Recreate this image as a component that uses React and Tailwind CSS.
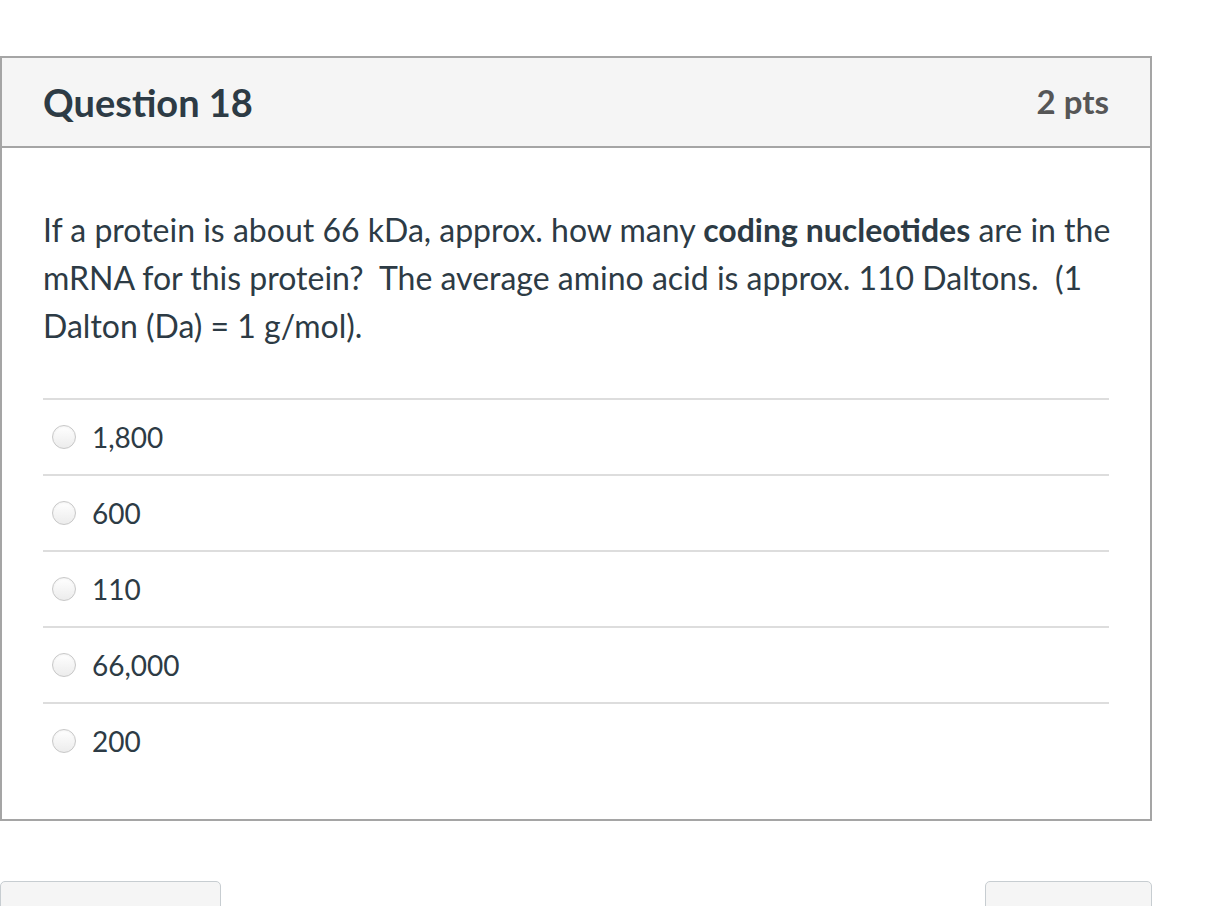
export default function App() {
  const answers = ["1,800", "600", "110", "66,000", "200"];

  return (
    <div className="min-h-screen bg-white text-[#2d3b45]" style={{ fontFamily: "Lato, 'Open Sans', sans-serif" }}>
      <div className="pt-[56px] w-[1152px]">
        <div className="border-2 border-[#a5a5a5]">
          {/* header */}
          <div className="h-[90px] bg-[#f5f5f5] border-b-2 border-[#a5a5a5] flex items-center justify-between px-[41px]">
            <h2 className="text-[38px] font-bold">Question 18</h2>
            <span className="text-[33px] font-bold text-[#565656]">2 pts</span>
          </div>

          <div className="pl-[41px] pr-[41px] pt-[58px] pb-[41px]">
            <p className="text-[32px] leading-[48px] -mr-[6px]">
              If a protein is about 66 kDa, approx. how many <b>coding nucleotides</b> are in the mRNA for this protein?&nbsp; The average amino acid is approx. 110 Daltons.&nbsp; (1 Dalton (Da) = 1 g/mol).
            </p>

            <div className="mt-[48px]">
              {answers.map((a) => (
                <div key={a} className="h-[76px] border-t-2 border-[#dddddd] flex items-center">
                  <span className="ml-[9px] w-6 h-6 rounded-full border border-[#c8c8c8] bg-gradient-to-b from-white to-[#ececec] shadow-[inset_0_1px_2px_rgba(0,0,0,0.05)]"></span>
                  <span className="ml-[16px] text-[28px]">{a}</span>
                </div>
              ))}
            </div>
          </div>
        </div>

        <div className="mt-[60px] flex justify-between">
          <button className="w-[221px] h-[44px] bg-[#f5f5f5] border border-[#c7cdd1] rounded-[5px]"></button>
          <button className="w-[167px] h-[44px] bg-[#f5f5f5] border border-[#c7cdd1] rounded-[5px]"></button>
        </div>
      </div>
    </div>
  );
}
